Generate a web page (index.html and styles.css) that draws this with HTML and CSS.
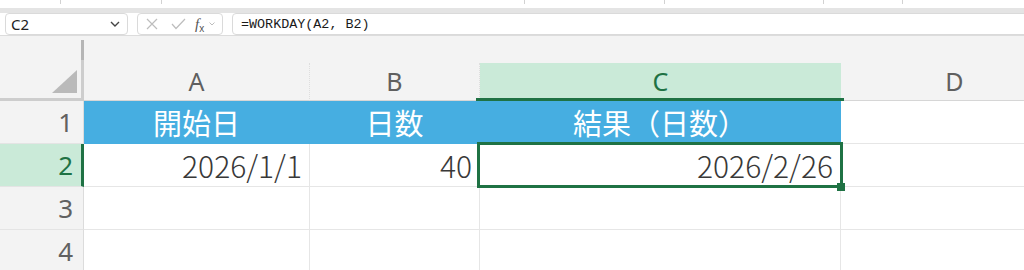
FILE: index.html
```html
<!DOCTYPE html>
<html lang="ja">
<head>
    <meta charset="UTF-8">
    <meta name="viewport" content="width=device-width, initial-scale=1.0">
    <title>WORKDAY</title>
    <link rel="stylesheet" href="styles.css">
</head>
<body>
    <div class="ribbon">
        <div class="seg"></div>
        <div class="seg"></div>
        <div class="seg"></div>
        <div class="seg"></div>
        <div class="seg"></div>
        <div class="seg"></div>
    </div>

    <div class="formula-bar">
        <div class="name-box">
            <span>C2</span>
            <svg width="10" height="6" viewBox="0 0 10 6"><path d="M1 1 L5 5 L9 1" fill="none" stroke="#444" stroke-width="1.4"/></svg>
        </div>
        <div class="fx-group">
            <svg width="12" height="12" viewBox="0 0 12 12"><path d="M1 1 L11 11 M11 1 L1 11" stroke="#bdbdbd" stroke-width="1.2"/></svg>
            <svg width="15" height="12" viewBox="0 0 15 12"><path d="M1 6 L5 10.5 L14 1" fill="none" stroke="#bdbdbd" stroke-width="1.2"/></svg>
            <span class="fx"><i>f</i><span class="fx-x">x</span></span>
            <svg width="6" height="4" viewBox="0 0 6 4"><path d="M0.5 0.5 L3 3 L5.5 0.5" fill="none" stroke="#bdbdbd" stroke-width="1"/></svg>
        </div>
        <div class="formula">=WORKDAY(A2, B2)</div>
    </div>

    <div class="sheet">
        <div class="corner"><span class="tri"></span></div>
        <div class="spacer"></div>

        <div class="col-head">A</div>
        <div class="col-head">B</div>
        <div class="col-head sel">C</div>
        <div class="col-head">D</div>

        <div class="row-head">1</div>
        <div class="cell title">開始日</div>
        <div class="cell title">日数</div>
        <div class="cell title">結果（日数）</div>
        <div class="cell"></div>

        <div class="row-head sel">2</div>
        <div class="cell">2026/1/1</div>
        <div class="cell">40</div>
        <div class="cell active">2026/2/26</div>
        <div class="cell"></div>

        <div class="row-head">3</div>
        <div class="cell"></div>
        <div class="cell"></div>
        <div class="cell"></div>
        <div class="cell"></div>

        <div class="row-head">4</div>
        <div class="cell"></div>
        <div class="cell"></div>
        <div class="cell"></div>
        <div class="cell"></div>
    </div>
</body>
</html>
```

FILE: styles.css
```css
body{
 margin: 0;
 width: 1024px;
 height: 270px;
 overflow: hidden;
 background-color: #f3f3f3;
 font-family: "Noto Sans", "Noto Sans CJK JP", sans-serif;
}
.ribbon{
 display: flex;
 height: 8px;
 background-color: #fff;
 border-bottom: 5px solid #e4e4e4;
}
.seg{
 height: 4px;
 border-right: 1px solid #d2d2d2;
}
.seg:nth-child(1){ width: 60px; }
.seg:nth-child(2){ width: 100px; }
.seg:nth-child(3){ width: 362px; }
.seg:nth-child(4){ width: 139px; }
.seg:nth-child(5){ width: 158px; }
.seg:nth-child(6){ width: 78px; }

.formula-bar{
 display: flex;
 gap: 9px;
 height: 22px;
 padding-left: 5px;
 background-color: #fff;
 border-bottom: 1px solid #dcdcdc;
}
.name-box,
.fx-group,
.formula{
 box-sizing: border-box;
 height: 22px;
 border: 1px solid #dadada;
 border-radius: 4px;
 display: flex;
 align-items: center;
 background-color: #fff;
}
.name-box{
 width: 123px;
 justify-content: space-between;
 padding: 0 7px 0 5px;
 font-size: 15px;
 color: #222;
}
.fx-group{
 width: 86px;
 padding: 0 5px 0 8px;
 gap: 11px;
}
.fx-group svg:nth-of-type(2){
 margin-left: 2px;
}
.fx{
 font-family: "Liberation Serif", serif;
 font-size: 15px;
 color: #555;
 margin-left: -2px;
 margin-right: -6px;
}
.fx-x{
 font-family: "Liberation Sans", sans-serif;
 font-size: 10px;
 position: relative;
 top: 3px;
}
.formula{
 flex: 1;
 margin-right: -10px;
 padding-left: 8px;
 font-family: "Liberation Mono", monospace;
 font-size: 13.4px;
 color: #1a1a1a;
}

.sheet{
 display: grid;
 grid-template-columns: 84px 226px 170px 361px 228px;
 grid-template-rows: 27px 38px 43px 43px 43px 43px;
}
.corner{
 grid-row: 1 / 3;
 position: relative;
 margin-top: 4px;
 border-right: 3px solid #cdcdcd;
 border-bottom: 3px solid #cdcdcd;
 display: flex;
 align-items: flex-end;
 justify-content: flex-end;
 padding: 0 4px 5px 0;
}
.corner::before{
 content: "";
 position: absolute;
 top: 0;
 right: -3px;
 width: 3px;
 height: 20px;
 background-color: #b5b5b5;
}
.tri{
 width: 0;
 height: 0;
 border-left: 25px solid transparent;
 border-bottom: 23px solid #bababa;
}
.spacer{
 grid-column: 2 / -1;
}
.col-head{
 display: flex;
 align-items: center;
 justify-content: center;
 border-right: 1px dotted #dedede;
 border-bottom: 1px solid #d6d6d6;
 font-size: 25px;
 color: #5f5f5f;
 padding-bottom: 2px;
}
.col-head.sel{
 position: relative;
 background-color: #caead8;
 color: #1f7244;
 border-right: none;
 border-bottom: none;
}
.col-head.sel::after{
 content: "";
 position: absolute;
 left: -4px;
 right: -3px;
 bottom: 0;
 height: 3px;
 background-color: #1f7244;
}
.row-head{
 display: flex;
 align-items: center;
 justify-content: flex-end;
 padding-right: 10px;
 border-bottom: 1px solid #e4e4e4;
 border-right: 1px solid #dcdcdc;
 font-size: 26px;
 color: #616161;
}
.row-head.sel{
 background-color: #caead8;
 color: #1f7244;
 border-right: 3px solid #1f7244;
 padding-right: 8px;
}
.cell{
 display: flex;
 align-items: center;
 justify-content: flex-end;
 padding: 0 7px;
 background-color: #fff;
 border-right: 1px solid #e6e6e6;
 border-bottom: 1px solid #e6e6e6;
 font-family: "Noto Sans CJK JP", sans-serif;
 font-weight: 300;
 font-size: 30px;
 color: #383838;
}
.cell:nth-child(5n+2){
 padding-right: 8px;
}
.cell.title{
 justify-content: center;
 background-color: #46aee1;
 border-color: #46aee1;
 color: #fff;
 font-weight: 400;
 font-size: 29px;
}
.cell.active{
 position: relative;
}
.cell.active::after{
 content: "";
 position: absolute;
 left: -3px;
 right: -3px;
 top: -2px;
 bottom: -2px;
 border: 3px solid #1f7244;
}
.cell.active::before{
 content: "";
 position: absolute;
 right: -5px;
 bottom: -5px;
 width: 8px;
 height: 8px;
 background-color: #1f7244;
 z-index: 1;
}
```
